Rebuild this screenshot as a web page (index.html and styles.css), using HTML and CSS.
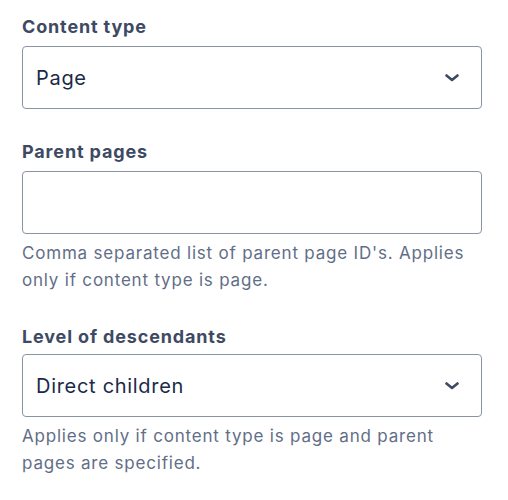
FILE: index.html
```html
<!DOCTYPE html>
<html>
<head>
<meta charset="utf-8">
<link rel="stylesheet" href="styles.css">
</head>
<body>
<div class="form">
  <div class="field">
    <label class="label">Content type</label>
    <div class="control select">
      <span class="value">Page</span>
      <svg class="chevron" width="14" height="8" viewBox="0 0 14 8"><path d="M1.5 1.5 L7 6 L12.5 1.5" fill="none" stroke="#3e4a63" stroke-width="2.6" stroke-linecap="round" stroke-linejoin="round"/></svg>
    </div>
  </div>
  <div class="field">
    <label class="label">Parent pages</label>
    <div class="control"></div>
    <p class="help">Comma separated list of parent page ID's. Applies only if content type is page.</p>
  </div>
  <div class="field">
    <label class="label">Level of descendants</label>
    <div class="control select">
      <span class="value">Direct children</span>
      <svg class="chevron" width="14" height="8" viewBox="0 0 14 8"><path d="M1.5 1.5 L7 6 L12.5 1.5" fill="none" stroke="#3e4a63" stroke-width="2.6" stroke-linecap="round" stroke-linejoin="round"/></svg>
    </div>
    <p class="help">Applies only if content type is page and parent pages are specified.</p>
  </div>
</div>
</body>
</html>
```
FILE: styles.css
```css
html, body {
  margin: 0;
  padding: 0;
  background: #ffffff;
}
body {
  font-family: Inter, "Noto Sans", sans-serif;
}
.form {
  width: 460px;
  padding: 15px 0 0 22px;
  display: flex;
  flex-direction: column;
  gap: 31px;
}
.field {
  display: flex;
  flex-direction: column;
}
.label {
  font-size: 18px;
  font-weight: 700;
  line-height: 24px;
  letter-spacing: 0.85px;
  color: #3e4a63;
  margin-bottom: 7px;
}
.control {
  box-sizing: border-box;
  height: 63px;
  border: 1px solid #8a93a4;
  border-radius: 4px;
  display: flex;
  align-items: center;
  padding: 0 22px 0 13px;
}
.select {
  justify-content: space-between;
}
.value {
  font-size: 20px;
  letter-spacing: 0.7px;
  color: #1b2a48;
}
.chevron {
  display: block;
}
.help {
  margin: 6px 0 0;
  font-size: 17px;
  line-height: 27px;
  letter-spacing: 0.8px;
  color: #626e87;
}
.field:last-child .label {
  margin-bottom: 5px;
}
```
